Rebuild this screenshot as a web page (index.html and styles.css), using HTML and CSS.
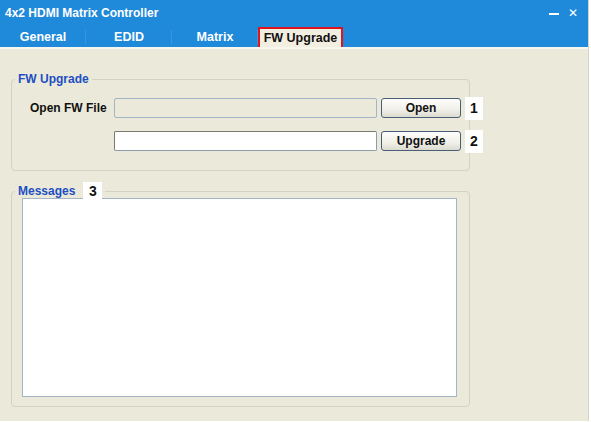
FILE: index.html
```html
<!DOCTYPE html>
<html lang="en">

<head>
    <meta charset="UTF-8" />
    <meta name="viewport" content="width=device-width, initial-scale=1" />
    <title>4x2 HDMI Matrix Controller</title>
    <link rel="stylesheet" href="styles.css">
</head>

<body>
    <div class="window">
        <div class="titlebar">
            <span class="title">4x2 HDMI Matrix Controller</span>
            <div class="controls">
                <span class="minimize"></span>
                <span class="close">&#x2715;</span>
            </div>
        </div>
        <div class="tabs">
            <div class="tab">General</div>
            <div class="tab">EDID</div>
            <div class="tab">Matrix</div>
            <div class="tab active">FW Upgrade</div>
        </div>

        <div class="content">
            <fieldset class="group upgrade">
                <legend>FW Upgrade</legend>
                <div class="row">
                    <label class="row-label">Open FW File</label>
                    <input class="field" type="text" disabled>
                    <button class="btn">Open</button>
                    <span class="badge">1</span>
                </div>
                <div class="row">
                    <span class="row-label"></span>
                    <input class="field" type="text">
                    <button class="btn">Upgrade</button>
                    <span class="badge">2</span>
                </div>
            </fieldset>

            <fieldset class="group messages">
                <legend>Messages <span class="badge">3</span></legend>
                <textarea class="log"></textarea>
            </fieldset>
        </div>
    </div>
</body>

</html>
```

FILE: styles.css
```css
body {
    margin: 0;
    background: #fff;
    font-family: "Liberation Sans", Arial, sans-serif;
    font-size: 12px;
    font-weight: bold;
}

.window {
    width: 588px;
    height: 421px;
    background: #ebe9d9;
    border-right: 1px solid #d6d4c4;
    display: flex;
    flex-direction: column;
}

.titlebar {
    height: 26px;
    background: #1f89da;
    color: #fff;
    display: flex;
    align-items: center;
    justify-content: space-between;
    padding: 0 10px 0 5px;
}

.controls {
    display: flex;
    align-items: center;
    gap: 9px;
}

.minimize {
    width: 10px;
    height: 2px;
    background: #fff;
    margin-top: 2px;
}

.close {
    font-size: 12px;
    font-weight: normal;
}

.tabs {
    height: 21px;
    background: #1f89da;
    display: flex;
    border-bottom: 2px solid #f6f5ee;
}

.tab {
    width: 86px;
    color: #fff;
    font-size: 12.5px;
    display: flex;
    align-items: center;
    justify-content: center;
    background-image: linear-gradient(#3a97de, #3a97de);
    background-size: 1px 14px;
    background-position: right center;
    background-repeat: no-repeat;
}

.tab.active {
    width: 81px;
    margin-top: 1px;
    background: #f2efe0;
    color: #111;
    border: 2px solid #e0141c;
    border-bottom: none;
}

.content {
    display: flex;
    flex-direction: column;
    padding: 0 0 0 11px;
}

.group {
    margin: 0;
    width: 459px;
    min-width: 0;
    box-sizing: border-box;
    border: 1px solid #d4d2c0;
    border-radius: 4px;
}

.group legend {
    color: #1d4fc2;
    padding: 0 3px;
    line-height: 14px;
    display: flex;
    align-items: center;
}

.upgrade {
    margin-top: 23px;
    padding: 12px 0 19px 18px;
}

.upgrade legend {
    margin-left: -15px;
}

.row {
    height: 20px;
    display: flex;
    align-items: center;
    gap: 4px;
}

.row + .row {
    margin-top: 13px;
}

.row-label {
    width: 80px;
    flex-shrink: 0;
    color: #111;
}

.field {
    width: 263px;
    height: 20px;
    flex-shrink: 0;
    box-sizing: border-box;
    margin: 0;
    border: 1px solid #8d9cac;
    border-top-color: #7a7a70;
    border-left-color: #7a7a70;
    border-radius: 2px;
    background: #fff;
}

.field:disabled {
    background: #ebe9d9;
    border-color: #a4b4c4;
}

.btn {
    width: 80px;
    height: 20px;
    flex-shrink: 0;
    padding: 0;
    font-family: "Liberation Sans", Arial, sans-serif;
    font-size: 12px;
    font-weight: bold;
    color: #111;
    border: 1px solid #4a5e78;
    border-radius: 3px;
    background: linear-gradient(#fdfdfb, #f0efe8 60%, #dcdbd0);
}

.badge {
    background: #fff;
    color: #111;
    width: 18px;
    height: 23px;
    flex-shrink: 0;
    display: flex;
    align-items: center;
    justify-content: center;
    font-size: 14px;
}

.messages {
    margin-top: 11px;
    padding: 0 12px 9px 10px;
}

.messages legend {
    margin-left: -7px;
    margin-bottom: -2px;
}

.messages legend .badge {
    margin-left: 8px;
    height: 18px;
    width: 19px;
}

.log {
    display: block;
    width: 435px;
    height: 199px;
    box-sizing: border-box;
    margin: 0;
    border: 1px solid #a5b5c8;
    resize: none;
    background: #fff;
}
```
